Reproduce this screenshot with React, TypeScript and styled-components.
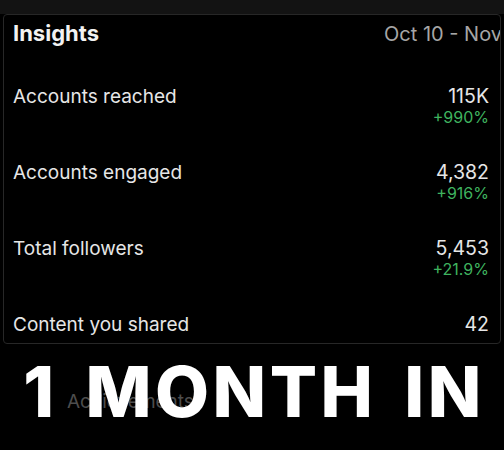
import React from "react";
import styled, { createGlobalStyle } from "styled-components";

const Global = createGlobalStyle`
  html, body { margin: 0; padding: 0; background: #000; }
  body { font-family: Inter, "Noto Sans", "Liberation Sans", sans-serif; -webkit-font-smoothing: antialiased; }
  * { box-sizing: border-box; }
`;

const Page = styled.div`
  width: 504px;
  height: 450px;
  background: #000;
  position: relative;
  overflow: hidden;
`;

const TopBand = styled.div`
  height: 14px;
  background: #131313;
`;

const Card = styled.div`
  margin: 0 3px;
  width: 498px;
  height: 330px;
  border: 1px solid #272727;
  border-radius: 4px;
  background: #000;
  overflow: hidden;
  display: flex;
  flex-direction: column;
`;

const Header = styled.div`
  display: flex;
  align-items: baseline;
  justify-content: space-between;
  padding: 5px 0 37px 9px;
`;

const Title = styled.div`
  font-size: 22px;
  line-height: 26px;
  font-weight: 700;
  color: #f2f2f2;
`;

const DateRange = styled.div`
  flex: 0 0 116px;
  overflow: hidden;
  white-space: nowrap;
  font-size: 20px;
  line-height: 26px;
  color: #a6a6a6;
`;

const Row = styled.div<{ $last?: boolean }>`
  display: flex;
  justify-content: space-between;
  align-items: flex-start;
  height: ${(p) => (p.$last ? "31px" : "76px")};
  padding: 1px 11px 0 9px;
`;

const Label = styled.div`
  font-size: 19px;
  line-height: 23px;
  color: #e6e6e6;
`;

const Values = styled.div`
  display: flex;
  flex-direction: column;
  align-items: flex-end;
`;

const Value = styled.div`
  font-size: 19.5px;
  line-height: 23px;
  color: #e6e6e6;
`;

const Change = styled.div`
  font-size: 16px;
  line-height: 19px;
  color: #3fb35f;
`;

const Below = styled.div`
  padding: 46px 0 0 67px;
`;

const Ghost = styled.div`
  font-size: 19px;
  line-height: 23px;
  color: #4d4d4d;
`;

const BigTitle = styled.div`
  position: absolute;
  left: 0;
  right: 0;
  top: 357px;
  text-align: center;
  font-family: Inter, "Open Sans", sans-serif;
  font-weight: 800;
  font-size: 70px;
  line-height: 70px;
  letter-spacing: 3.5px;
  word-spacing: 9px;
  padding-left: 4px;
  color: #fff;
  white-space: nowrap;
`;

const metrics = [
  { label: "Accounts reached", value: "115K", change: "+990%" },
  { label: "Accounts engaged", value: "4,382", change: "+916%" },
  { label: "Total followers", value: "5,453", change: "+21.9%" },
  { label: "Content you shared", value: "42" },
];

export default function App() {
  return (
    <Page>
      <Global />
      <TopBand />
      <Card>
        <Header>
          <Title>Insights</Title>
          <DateRange>Oct 10 - Nov 8</DateRange>
        </Header>
        {metrics.map((m, i) => (
          <Row key={m.label} $last={i === metrics.length - 1}>
            <Label>{m.label}</Label>
            <Values>
              <Value>{m.value}</Value>
              {m.change && <Change>{m.change}</Change>}
            </Values>
          </Row>
        ))}
      </Card>
      <Below>
        <Ghost>Achievements</Ghost>
      </Below>
      <BigTitle>1 MONTH IN</BigTitle>
    </Page>
  );
}
